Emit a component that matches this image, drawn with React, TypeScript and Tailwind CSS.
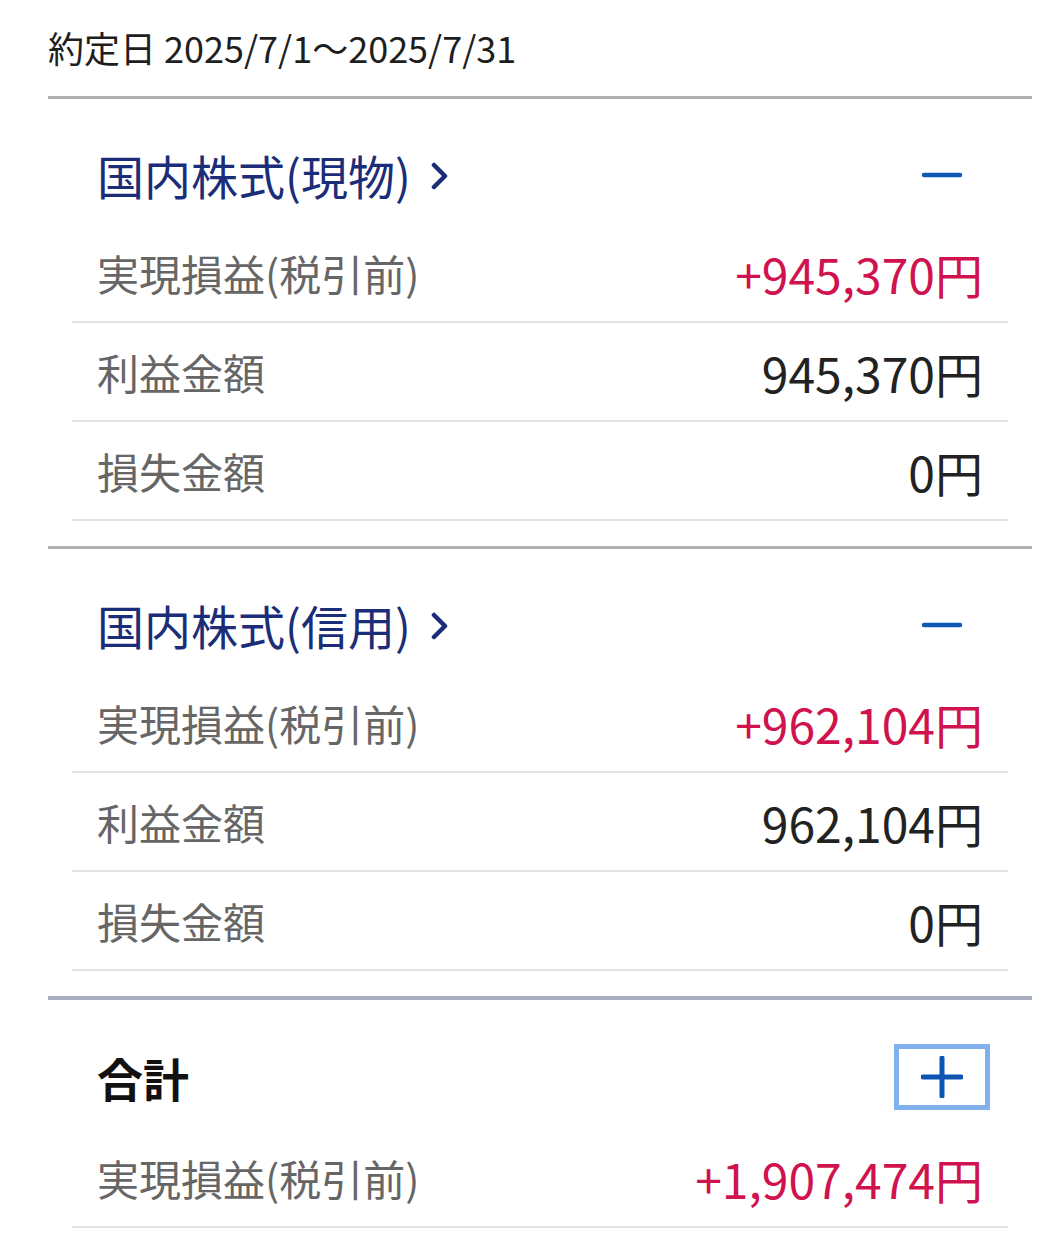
import React from 'react';

type Tone = 'plain' | 'red';

interface RowProps {
  label: string;
  value: string;
  tone?: Tone;
}

const Row: React.FC<RowProps> = ({ label, value, tone = 'plain' }) => (
  <div className="mx-[24px] flex h-[99px] items-center justify-between border-b-2 border-[#e3e3e3] px-[25px]">
    <span className="text-[42px] leading-none text-[#666666]">{label}</span>
    <span
      className={
        tone === 'red'
          ? 'text-[48px] leading-none text-[#d0124e]'
          : 'text-[48px] leading-none text-[#222222]'
      }
    >
      {value}
    </span>
  </div>
);

const MinusIcon = () => (
  <svg width="42" height="10" viewBox="0 0 42 10">
    <line x1="3" y1="5" x2="39" y2="5" stroke="#0c5ab4" strokeWidth="4.5" strokeLinecap="round" />
  </svg>
);

const PlusIcon = () => (
  <svg width="42" height="42" viewBox="0 0 42 42">
    <line x1="2" y1="21" x2="40" y2="21" stroke="#0c55b4" strokeWidth="5" strokeLinecap="round" />
    <line x1="21" y1="2" x2="21" y2="40" stroke="#0c55b4" strokeWidth="5" strokeLinecap="round" />
  </svg>
);

const Chevron = () => (
  <svg width="18" height="28" viewBox="0 0 18 28" className="ml-[20px] mt-[2px]">
    <polyline
      points="3,3 14,14 3,25"
      fill="none"
      stroke="#1b2d78"
      strokeWidth="4.5"
      strokeLinecap="round"
      strokeLinejoin="round"
    />
  </svg>
);

interface SectionProps {
  title: string;
  link?: boolean;
  open?: boolean;
  rows: RowProps[];
}

const Section: React.FC<SectionProps> = ({ title, link, open, rows }) => (
  <section className={open ? 'border-t-[3px] border-[#b1b1b1] pb-[25px]' : 'border-t-[4px] border-[#a9aec0]'}>
    <div
      className={
        open
          ? 'flex h-[125px] items-center justify-between pt-[26px] pl-[49px] pr-[42px]'
          : 'flex h-[129px] items-center justify-between pt-[25px] pl-[49px] pr-[42px]'
      }
    >
      {link ? (
        <div className="flex items-center">
          <span className="text-[47px] leading-none font-normal text-[#1b2d78]">{title}</span>
          <Chevron />
        </div>
      ) : (
        <span className="text-[46px] leading-none font-bold text-[#111111]">{title}</span>
      )}
      {open ? (
        <button className="flex h-[66px] w-[96px] items-center justify-center border-[5px] border-transparent">
          <MinusIcon />
        </button>
      ) : (
        <button className="flex h-[66px] w-[96px] items-center justify-center border-[5px] border-[#80b0ee]">
          <PlusIcon />
        </button>
      )}
    </div>
    {rows.map((r) => (
      <Row key={r.label} {...r} />
    ))}
  </section>
);

export default function App() {
  return (
    <div className="min-h-[1245px] w-[1058px] overflow-hidden bg-white pl-[48px] pr-[26px] font-['Noto_Sans_CJK_JP','Noto_Sans',sans-serif]">
      <div className="flex h-[96px] items-center pb-[2px]">
        <p className="text-[36px] leading-none text-[#1e1e1e]">約定日 2025/7/1～2025/7/31</p>
      </div>

      <Section
        title="国内株式(現物)"
        link
        open
        rows={[
          { label: '実現損益(税引前)', value: '+945,370円', tone: 'red' },
          { label: '利益金額', value: '945,370円' },
          { label: '損失金額', value: '0円' },
        ]}
      />
      <Section
        title="国内株式(信用)"
        link
        open
        rows={[
          { label: '実現損益(税引前)', value: '+962,104円', tone: 'red' },
          { label: '利益金額', value: '962,104円' },
          { label: '損失金額', value: '0円' },
        ]}
      />
      <Section
        title="合計"
        rows={[{ label: '実現損益(税引前)', value: '+1,907,474円', tone: 'red' }]}
      />
    </div>
  );
}
